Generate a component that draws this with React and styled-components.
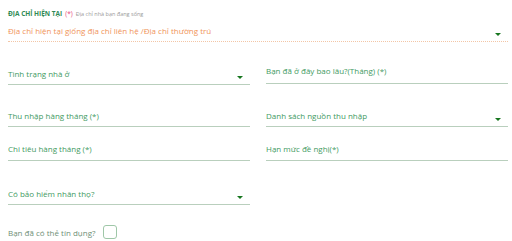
import React from 'react'
import styled, { createGlobalStyle } from 'styled-components'

const GlobalStyle = createGlobalStyle`
  body {
    margin: 0;
    background: #ffffff;
    font-family: "Open Sans", "Noto Sans", sans-serif;
  }
`

const Page = styled.div`
  width: 512px;
  height: 241px;
  padding: 0 4px 0 8px;
  box-sizing: border-box;
  overflow: hidden;
`

const SectionHead = styled.div`
  display: flex;
  align-items: baseline;
  gap: 3px;
  height: 10px;
  margin-top: 9px;
  line-height: 10px;
  white-space: nowrap;
`

const HeadTitle = styled.span`
  font-size: 6.5px;
  font-weight: 700;
  color: #2f8a55;
`

const Required = styled.span`
  font-size: 6.5px;
  color: #e8497c;
`

const HeadHint = styled.span`
  font-size: 5.5px;
  color: #9a9a9a;
`

const AddressSelect = styled.div`
  position: relative;
  display: flex;
  align-items: center;
  height: 16px;
  margin-top: 3px;
  padding-bottom: 3px;
  border-bottom: 1px dotted #f3c6a6;
  font-size: 8px;
  color: #f0945a;
  white-space: nowrap;
`

const Grid = styled.div`
  display: grid;
  grid-template-columns: 1fr 1fr;
  column-gap: 16px;
`

const Row = styled.div`
  display: contents;
`

const Cell = styled.div`
  height: ${p => p.$h}px;
  display: flex;
  flex-direction: column;
  justify-content: flex-end;
`

const Field = styled.div`
  position: relative;
  padding-bottom: ${p => p.$pad}px;
  border-bottom: 1px solid #b9cfbd;
  font-size: 8px;
  line-height: 10px;
  color: #3f9a5f;
  white-space: nowrap;
`

const Caret = styled.span`
  position: absolute;
  right: 7px;
  bottom: 5px;
  width: 0;
  height: 0;
  border-left: 3px solid transparent;
  border-right: 3px solid transparent;
  border-top: 3px solid #17761f;
`

const CheckRow = styled.div`
  display: flex;
  align-items: center;
  gap: 8px;
  margin-top: 20px;
  font-size: 8px;
  color: #6f8f77;
`

const CheckBox = styled.span`
  display: inline-block;
  width: 12px;
  height: 12px;
  border: 1px solid #9fc7a8;
  border-radius: 3px;
`

function Select({ label, pad }) {
  return (
    <Field $pad={pad}>
      {label}
      <Caret />
    </Field>
  )
}

export default function App() {
  return (
    <Page>
      <GlobalStyle />
      <SectionHead>
        <HeadTitle>ĐỊA CHỈ HIỆN TẠI</HeadTitle>
        <Required>(*)</Required>
        <HeadHint>Địa chỉ nhà bạn đang sống</HeadHint>
      </SectionHead>
      <AddressSelect>
        Địa chỉ hiện tại giống địa chỉ liên hệ /Địa chỉ thường trú
        <Caret />
      </AddressSelect>
      <Grid>
        <Row>
          <Cell $h={43}><Select label="Tình trạng nhà ở" pad={5} /></Cell>
          <Cell $h={42}><Field $pad={7}>Bạn đã ở đây bao lâu?(Tháng) (*)</Field></Cell>
        </Row>
        <Row>
          <Cell $h={42}><Field $pad={5}>Thu nhập hàng tháng (*)</Field></Cell>
          <Cell $h={42}><Select label="Danh sách nguồn thu nhập" pad={5} /></Cell>
        </Row>
        <Row>
          <Cell $h={34}><Field $pad={6}>Chi tiêu hàng tháng (*)</Field></Cell>
          <Cell $h={34}><Field $pad={6}>Hạn mức đề nghị(*)</Field></Cell>
        </Row>
        <Row>
          <Cell $h={44}><Select label="Có bảo hiểm nhân thọ?" pad={5} /></Cell>
          <Cell $h={44} />
        </Row>
      </Grid>
      <CheckRow>
        Bạn đã có thẻ tín dụng?
        <CheckBox />
      </CheckRow>
    </Page>
  )
}
